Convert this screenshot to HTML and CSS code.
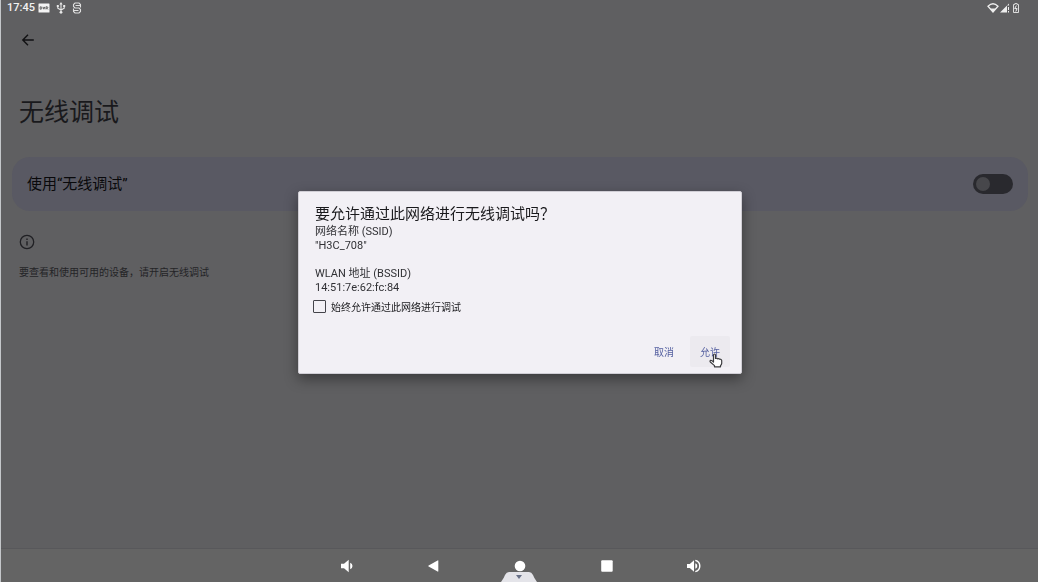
FILE: index.html
```html
<!DOCTYPE html>
<html lang="zh-CN">
<head>
<meta charset="utf-8">
<meta name="viewport" content="width=device-width, initial-scale=1">
<title>无线调试</title>
<link rel="stylesheet" href="styles.css">
</head>
<body>
<div class="screen">
  <header class="status">
    <div class="status-group">
      <time class="clock">17:45</time>
      <svg class="ico-dvr" viewBox="0 0 12 10"><rect x="0.5" y="0.5" width="11" height="9" rx="0.6" fill="#f4f4f4"/><path d="M2.200 3.800v2.400h.8q.9 0 .9-1.200t-.9-1.200zM5 3.800l.9 2.400.9-2.400M8 6.400V3.800h1q.8 0 .8.700t-.8.700H8M9 5.200l.9 1.200" fill="none" stroke="#666" stroke-width="1"/></svg>
      <svg class="ico-usb" viewBox="0 0 10 12"><path d="M5 1.500v8M1.800 4v2.200L5 8l3.200-1.800V4" fill="none" stroke="#e8e8e8" stroke-width="1.100"/><path d="M5 0 3.400 2.400h3.200zM.8 3h2v2h-2zM7.200 3h2v2h-2z" fill="#e8e8e8"/><circle cx="5" cy="10.300" r="1.400" fill="#e8e8e8"/></svg>
      <svg class="ico-usb" viewBox="0 0 10 12"><path d="M8.500 3.500V2.500L7 1H3L1.500 2.500v2L3 6h4l1.500 1.500v2L7 11H3L1.500 9.500v-3M8.500 3.500v2M3.500 3.500h5M1.500 8.500h5" fill="none" stroke="#e0e0e0" stroke-width="1.100"/></svg>
    </div>
    <div class="status-group signals">
      <svg class="ico-wifi" viewBox="0 0 12 10"><path d="M1 3.200Q6-1.600 11 3.200L6 9z" fill="none" stroke="#eee" stroke-width="1.300"/><path d="M3.200 5.600h5.600L6 9.300z" fill="#eee"/></svg>
      <svg class="ico-cell" viewBox="0 0 10 10"><path d="M0 9.500 9 .5v2H7v7z" fill="#eee"/><path d="M8 4h1v3H8zM8 8h1v1.500H8z" fill="#eee"/></svg>
      <svg class="ico-batt" viewBox="0 0 8 10"><path d="M1.500 1.500h1.300V.6h2.400v.9h1.300v8h-5z" fill="none" stroke="#ddd" stroke-width="1"/><path d="M4.400 2.500 2.700 5.600h2.400L3.800 8.500" fill="none" stroke="#eee" stroke-width="1"/></svg>
    </div>
  </header>

  <main class="content">
    <button class="back" type="button" aria-label="返回">
      <svg viewBox="0 0 14 14"><path d="M12.800 7H2M7 1.800 1.800 7 7 12.200" fill="none" stroke="#111113" stroke-width="1.400"/></svg>
    </button>
    <h1 class="title">无线调试</h1>
    <label class="card">
      <span>使用“无线调试”</span>
      <input class="toggle" type="checkbox" role="switch">
    </label>
    <section class="info">
      <svg class="info-icon" viewBox="0 0 16 16"><circle cx="8" cy="8" r="6.700" fill="none" stroke="#202024" stroke-width="1.300"/><path d="M7.300 7.200h1.400v4.300H7.300zM7.300 4.500h1.400v1.400H7.300z" fill="#202024"/></svg>
      <p class="info-text">要查看和使用可用的设备，请开启无线调试</p>
    </section>
  </main>

  <nav class="navbar">
    <button type="button" aria-label="降低音量"><svg viewBox="0 0 14 14"><path d="M2 4.700h3L9.700.7v12.600L5 9.300H2z" fill="#fff"/><path d="M11.200 3.800Q13.500 4.800 13.500 7t-2.300 3.200z" fill="#fff"/></svg></button>
    <button type="button" aria-label="返回"><svg viewBox="0 0 14 14"><path d="M12.300 1.800v10.400q0 .7-.7.400L2.600 7.500q-.8-.5 0-1L11.600 1.400q.7-.3.700.4z" fill="#fff"/></svg></button>
    <button type="button" aria-label="主屏幕"><svg viewBox="0 0 14 14"><circle cx="7" cy="7" r="5.300" fill="#fff"/></svg></button>
    <button type="button" aria-label="最近任务"><svg viewBox="0 0 14 14"><rect x="1.200" y="1.300" width="11.500" height="11.500" rx="1" fill="#fff"/></svg></button>
    <button type="button" aria-label="提高音量"><svg viewBox="0 0 14 14"><path d="M0 4.900h2.800L7 1.200v11.600L2.800 9.100H0z" fill="#fff"/><path d="M8.300 4.200Q10.300 5 10.300 7t-2 2.800z" fill="#fff"/><path d="M8.300 1.400Q12.800 2.500 12.800 7t-4.500 5.600" fill="none" stroke="#fff" stroke-width="1.400"/></svg></button>
  </nav>
</div>

<svg class="handle" viewBox="0 0 36 10"><path d="M0 10Q3 6 4 3 5.500 0 8 0H28q2.500 0 4 3 1 3 4 7z" fill="#e4e4e9"/><path d="M15 3h6l-3 4z" fill="#687087"/></svg>

<div class="scrim">
  <form class="dialog" role="dialog" aria-labelledby="dlg-title">
    <h2 class="dialog-title" id="dlg-title">要允许通过此网络进行无线调试吗？</h2>
    <p class="detail">网络名称 (SSID)<br>"H3C_708"</p>
    <p class="detail second">WLAN 地址 (BSSID)<br>14:51:7e:62:fc:84</p>
    <label class="always"><input class="check" type="checkbox">始终允许通过此网络进行调试</label>
    <div class="actions">
      <button class="action" type="button">取消</button>
      <button class="action hovered" type="button">允许
        <svg class="pointer" viewBox="0 0 14 15"><path d="M4.500 8.500V2.200q0-1.200 1-1.200t1 1.200v3.300q1.300-.7 2 .3 1.300-.6 2 .4 2-.3 2.200 1.400v2.700q-.2 1.300-1.200 2.300v1.200H5.500v-1.200L1.300 9Q.6 7.800 1.600 7.400t2.900 1.600z" fill="#fff" stroke="#3c3c3f" stroke-width="1.200" stroke-linejoin="round"/></svg>
      </button>
    </div>
  </form>
</div>
</body>
</html>
```

FILE: styles.css
```css
* {
  box-sizing: border-box;
}

body {
  margin: 0;
  font-family: Roboto, "Noto Sans CJK SC", sans-serif;
  background: #5f5f61;
  color: #19191c;
}

h1,
h2,
p {
  margin: 0;
  font-weight: 400;
}

button {
  padding: 0;
  border: 0;
  background: none;
  font: inherit;
}

svg {
  display: block;
}

.screen {
  display: flex;
  flex-direction: column;
  min-height: 100vh;
  border-left: 1px solid #c4c7ca;
}

.status {
  display: flex;
  justify-content: space-between;
  height: 16px;
  padding: 0 18px 0 6px;
}

.status-group {
  display: flex;
  align-items: center;
  gap: 6px;
}

.signals {
  gap: 1px;
}

.clock {
  margin-right: -3px;
  color: #f2f2f2;
  font-size: 11px;
  font-weight: 500;
  line-height: 16px;
}

.ico-dvr {
  width: 12px;
  height: 10px;
}

.ico-usb {
  width: 10px;
  height: 12px;
}

.ico-wifi {
  width: 12px;
  height: 10px;
}

.ico-cell {
  width: 10px;
  height: 10px;
}

.ico-batt {
  width: 8px;
  height: 10px;
  margin-left: 1px;
}

.content {
  flex: 1;
  padding: 17px 10px 0 11px;
}

.back {
  display: block;
  margin-left: 9px;
}

.back svg {
  width: 14px;
  height: 14px;
}

.title {
  margin: 46px 0 0 7px;
  font-size: 25px;
  line-height: 40px;
}

.card {
  display: flex;
  align-items: center;
  justify-content: space-between;
  height: 54px;
  margin-top: 24px;
  padding: 0 15px;
  border-radius: 18px;
  background: #595963;
  color: #09090b;
  font-size: 15px;
  line-height: 20px;
}

.toggle {
  display: flex;
  align-items: center;
  width: 40px;
  height: 20px;
  margin: 0;
  padding: 3px;
  border-radius: 10px;
  background: #29292e;
  appearance: none;
}

.toggle::before {
  width: 14px;
  height: 14px;
  border-radius: 50%;
  background: #47474b;
  content: "";
}

.info {
  padding: 23px 7px 0;
}

.info-icon {
  width: 16px;
  height: 16px;
}

.info-text {
  margin-top: 15px;
  color: #242427;
  font-size: 10px;
  line-height: 16px;
}

.navbar {
  display: flex;
  justify-content: center;
  gap: 39px;
  height: 34px;
  border-top: 1px solid #58585b;
  background: #646464;
}

.navbar button {
  display: grid;
  place-items: center;
  width: 48px;
}

.navbar svg {
  width: 14px;
  height: 14px;
}

.handle {
  position: fixed;
  bottom: 0;
  left: 50%;
  width: 36px;
  height: 10px;
  margin-left: -18px;
}

.scrim {
  position: fixed;
  inset: 0;
  display: grid;
  place-items: center;
  padding: 0 0 18px 2px;
}

.dialog {
  width: 444px;
  max-width: 100%;
  padding: 11px 11px 6px 16px;
  border: 1px solid #d0ced5;
  border-radius: 2px;
  background: #f2f0f5;
  box-shadow: 0 5px 14px rgba(0, 0, 0, 0.4);
}

.dialog-title {
  font-size: 15px;
  line-height: 22px;
}

.detail {
  color: #303034;
  font-size: 11px;
  line-height: 14px;
}

.second {
  margin-top: 14px;
}

.always {
  display: flex;
  align-items: center;
  gap: 5px;
  height: 23px;
  margin-left: -2px;
  font-size: 10px;
}

.check {
  width: 13px;
  height: 13px;
  margin: 0;
  border: 1px solid #44444a;
  border-radius: 1px;
  appearance: none;
}

.actions {
  display: flex;
  justify-content: flex-end;
  gap: 6px;
  margin-top: 18px;
}

.action {
  position: relative;
  width: 40px;
  height: 31px;
  border-radius: 2px;
  color: #5560a0;
  font-size: 10px;
}

.hovered {
  background: #eceaef;
}

.pointer {
  position: absolute;
  top: 17px;
  left: 19px;
  width: 14px;
  height: 15px;
}
```
